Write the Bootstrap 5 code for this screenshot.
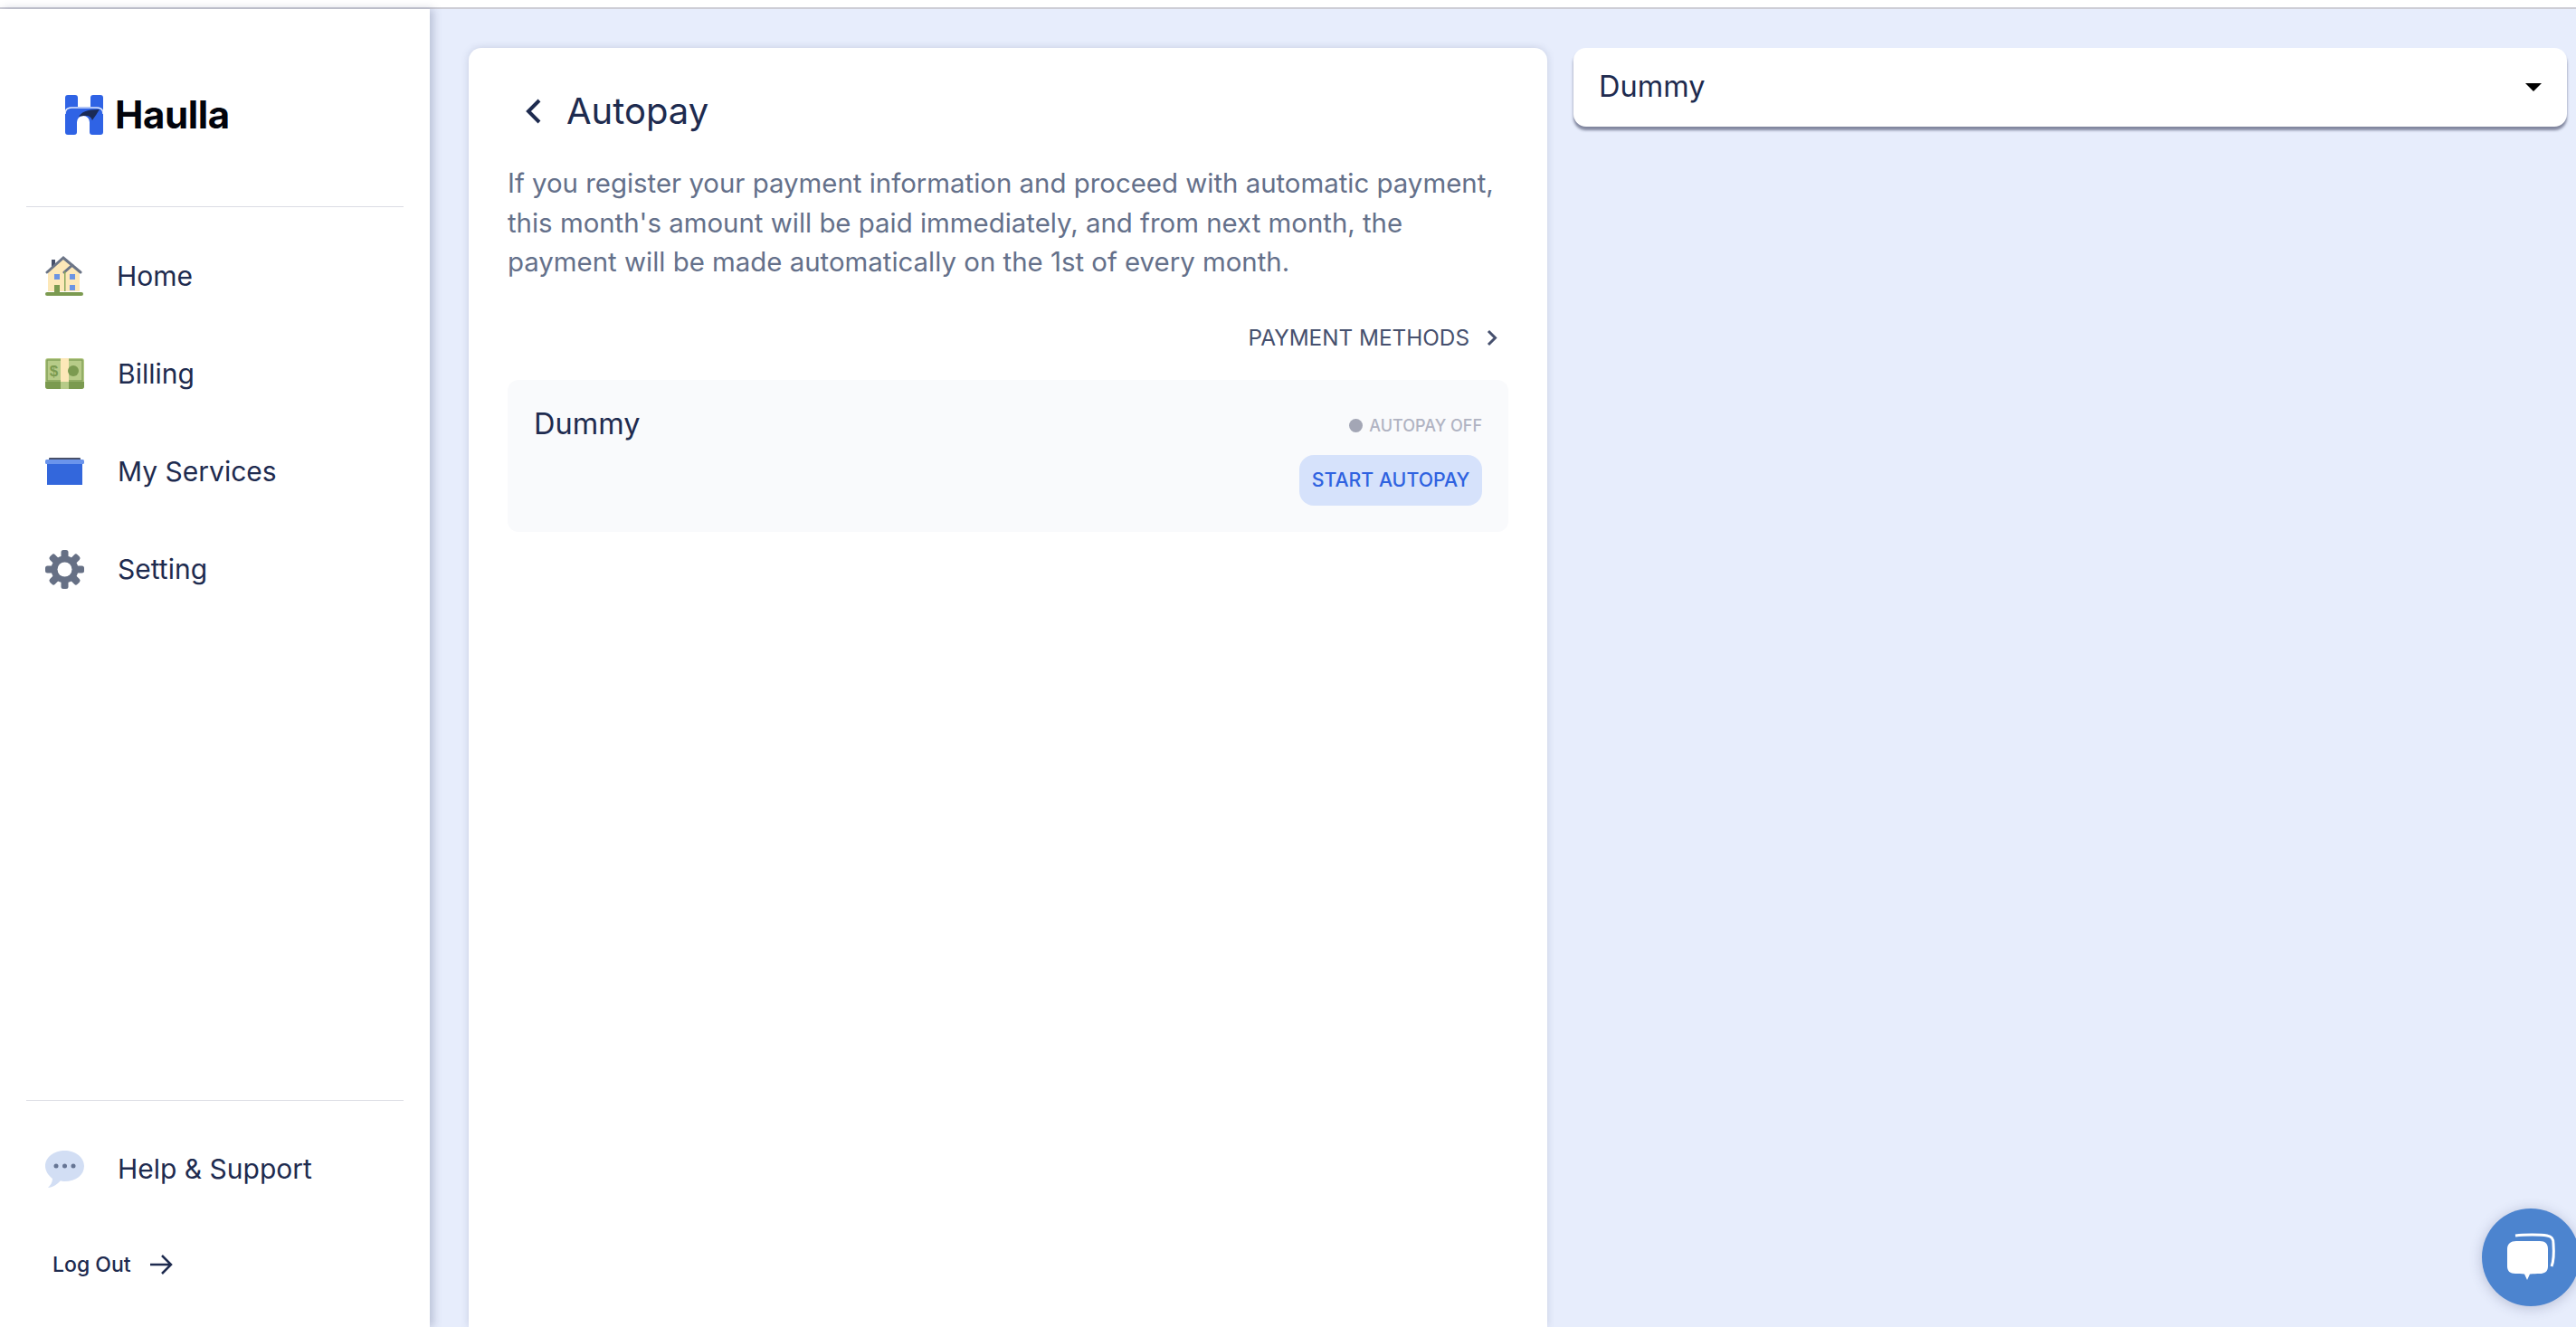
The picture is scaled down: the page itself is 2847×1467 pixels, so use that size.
<!doctype html>
<html lang="en">
<head>
<meta charset="utf-8">
<title>Autopay</title>
<link rel="stylesheet" href="https://cdn.jsdelivr.net/npm/bootstrap@5.3.0/dist/css/bootstrap.min.css">
<style>
html,body{height:100%}
body{background:#fff;overflow:hidden;font-family:"Inter","Liberation Sans",sans-serif;color:#1e2b4f}
.topstrip{height:10px;background:#fff;border-bottom:2px solid #cdcdd5;flex:none}
.stage{background:#e7edfc;min-height:0}
.sidebar{width:475px;flex:none;background:#fff;box-shadow:4px 0 9px rgba(70,80,120,.28);z-index:2}
.logobar{height:219px;padding:95px 0 0 43px;margin:0 29px;border-bottom:1px solid #dcdde4;gap:13px}
.logotext{font-size:42px;line-height:40px;font-weight:700;color:#02040c;letter-spacing:-.4px;margin-top:2px}
.navitem{height:108px;padding-left:21px;gap:37px;font-size:30px;font-weight:400;color:#1e2b4f;text-decoration:none}
.navlist{margin:0 29px;padding-top:22px}
.sidefoot{margin:0 29px;border-top:1px solid #dcdde4;padding:21px 0 49px}
.logout{font-size:23px;font-weight:500;color:#1e2b4f;text-decoration:none;padding-left:29px;margin-top:32px;gap:21px;height:40px}
.workarea{padding:43px 10px 0 43px;gap:29px;min-width:0}
.mainpanel{width:1192px;flex:none;border:0;border-radius:14px 14px 0 0;padding:42px 43px;box-shadow:0 0 8px rgba(70,80,120,.2)}
.heading{font-size:40px;font-weight:400;line-height:56px;color:#1e2b4f;gap:27px;padding-left:19px;margin:0}
.intro{font-size:29.400px;line-height:43.500px;color:#64708a;margin:30px 0 0;width:1105px}
.methods{font-size:24.300px;color:#46506e;gap:19px;margin-top:47px;padding-right:12px;height:30px}
.paybox{background:#f9fafc;border-radius:12px;height:168px;margin-top:31px;padding:26px 29px}
.payname{font-size:32.500px;line-height:46px;color:#1e2b4f}
.status{font-size:18px;line-height:26px;color:#b0b3c2;gap:7px;margin-top:12px;font-weight:500}
.statusdot{width:15px;height:15px;border-radius:50%;background:#a3a6b5;display:inline-block}
.startbtn{background:#d6e2fb;color:#2f62e0;border:0;border-radius:16px;height:56px;width:202px;padding:0;font-size:21.300px;font-weight:500;margin-top:19px}
.selectbox{background:#fff;height:87px;border-radius:14px;padding:0 28px;box-shadow:0 4px 3px rgba(60,65,95,.6);font-size:32.500px;color:#1e2b4f;width:1098px;flex:none}
.selectbox::after{color:#000;margin:0;border-width:.28em .28em 0}
.chatbubble{position:fixed;left:2743px;top:1336px;width:108px;height:108px;border-radius:50%;background:#4c84cf;box-shadow:0 2px 14px rgba(60,70,110,.28);z-index:5}
</style>
</head>
<body class="d-flex flex-column">
<div class="topstrip"></div>
<div class="stage d-flex flex-grow-1">
  <aside class="sidebar d-flex flex-column">
    <div class="logobar d-flex align-items-start">
      <svg width="42" height="44" viewBox="0 0 42 44" aria-hidden="true">
        <path fill="#2f63e5" d="M3 0h8a3 3 0 0 1 3 3v10h14V3a3 3 0 0 1 3-3h8a3 3 0 0 1 3 3v38a3 3 0 0 1-3 3h-9a3 3 0 0 1-3-3V30a7 7 0 0 0-14 0v11a3 3 0 0 1-3 3H3a3 3 0 0 1-3-3V3a3 3 0 0 1 3-3z"/>
        <path fill="none" stroke="#dfe8fb" stroke-width="1.6" d="M0 21c0-5 3-7 7-7h28c4 0 7 2 7 7"/>
        <path fill="#1b2b55" d="M15 24c3-5 8-8 23-8-2 3-5 8-8 12-1-3-3-5-7-5-3 0-6 0-8 1z"/>
      </svg>
      <div class="logotext">Haulla</div>
    </div>
    <nav class="navlist d-flex flex-column flex-grow-1">
      <a class="navitem d-flex align-items-center" href="#">
        <svg width="42" height="44" viewBox="0 0 42 44" aria-hidden="true"><rect x="7" y="4" width="4" height="10" fill="#475069"/><path fill="#fde8b8" d="M3 18 20 3l18 15v21H3z"/><path fill="none" stroke="#6c7587" stroke-width="3" stroke-linecap="round" d="M2 18 20 2l19 16M21 18l9-8"/><rect x="21" y="17" width="1.5" height="22" fill="#88a75c"/><rect x="10" y="20" width="6" height="6" fill="#6c94e3"/><rect x="27" y="20" width="6" height="6" fill="#6c94e3"/><rect x="27" y="32" width="6" height="6" fill="#6c94e3"/><rect x="10" y="32" width="6" height="8" fill="#7b9a50"/><rect x="0" y="40" width="42" height="4" rx="2" fill="#7b9a50"/></svg>
        <span>Home</span>
      </a>
      <a class="navitem d-flex align-items-center" href="#">
        <svg width="43" height="34" viewBox="0 0 43 34" aria-hidden="true"><rect width="43" height="34" rx="3" fill="#b7cb88"/><path d="M0 26h43v5a3 3 0 0 1-3 3H3a3 3 0 0 1-3-3z" fill="#7b9a50"/><rect x="2" y="2" width="39" height="23" fill="none" stroke="#7b9a50" stroke-width="1.2"/><rect x="17" width="9" height="26" fill="#fde8b8"/><rect x="17" y="26" width="9" height="8" fill="#b7cb88"/><text x="9.500" y="20" font-size="17" font-weight="700" fill="#7b9a50" text-anchor="middle" font-family="Liberation Sans">$</text><circle cx="31" cy="14" r="6" fill="#7b9a50"/></svg>
        <span>Billing</span>
      </a>
      <a class="navitem d-flex align-items-center" href="#">
        <svg width="43" height="30" viewBox="0 0 43 30" aria-hidden="true"><rect x="4" y="0" width="35" height="4" rx="1" fill="#475069"/><rect x="2" y="5" width="39" height="25" fill="#3367dc"/><rect y="2" width="43" height="5" rx="1.500" fill="#6a94ec"/></svg>
        <span>My Services</span>
      </a>
      <a class="navitem d-flex align-items-center" href="#">
        <svg width="43" height="43" viewBox="0 0 43 43" aria-hidden="true"><g fill="#667085"><rect x="17.500" y="0" width="8" height="43" rx="2.500"/><rect x="17.500" y="0" width="8" height="43" rx="2.500" transform="rotate(45 21.500 21.500)"/><rect x="17.500" y="0" width="8" height="43" rx="2.500" transform="rotate(90 21.500 21.500)"/><rect x="17.500" y="0" width="8" height="43" rx="2.500" transform="rotate(135 21.500 21.500)"/></g><circle cx="21.500" cy="21.500" r="11.500" fill="none" stroke="#667085" stroke-width="7"/><circle cx="21.500" cy="21.500" r="8" fill="#fff"/></svg>
        <span>Setting</span>
      </a>
    </nav>
    <div class="sidefoot">
      <a class="navitem d-flex align-items-center" href="#">
        <svg width="43" height="41" viewBox="0 0 43 41" aria-hidden="true"><path fill="#d2def4" d="M21.500 0C33 0 43 7 43 17s-9 17-21.500 17c-2 0-3.500 0-5-.4C14 37 8 41 3 41c3-3 5-6 5-10C3 27 0 22 0 17 0 7 10 0 21.500 0z"/><circle cx="12" cy="17" r="2.500" fill="#667594"/><circle cx="21.500" cy="17" r="2.500" fill="#667594"/><circle cx="31" cy="17" r="2.500" fill="#667594"/></svg>
        <span>Help &amp; Support</span>
      </a>
      <a class="logout d-flex align-items-center" href="#">
        <span>Log Out</span>
        <svg width="25" height="24" viewBox="0 0 25 24" aria-hidden="true"><path fill="none" stroke="#1e2b4f" stroke-width="2.500" d="M0 12h23M13 2l10 10-10 10"/></svg>
      </a>
    </div>
  </aside>
  <main class="workarea d-flex flex-grow-1 align-items-start">
    <section class="mainpanel card align-self-stretch">
      <h1 class="heading d-flex align-items-center">
        <svg width="19" height="28" viewBox="0 0 19 28" aria-hidden="true"><path fill="none" stroke="#1e2b4f" stroke-width="4" d="M16 2 4 14l12 12"/></svg>
        <span>Autopay</span>
      </h1>
      <p class="intro">If you register your payment information and proceed with automatic payment, this month's amount will be paid immediately, and from next month, the payment will be made automatically on the 1st of every month.</p>
      <div class="methods d-flex justify-content-end align-items-center">
        <span>PAYMENT METHODS</span>
        <svg width="12" height="19" viewBox="0 0 12 19" aria-hidden="true"><path fill="none" stroke="#46506e" stroke-width="3" d="m2 2 7.500 7.500L2 17"/></svg>
      </div>
      <div class="paybox d-flex justify-content-between">
        <div class="payname">Dummy</div>
        <div class="d-flex flex-column align-items-end">
          <div class="status d-flex align-items-center"><span class="statusdot"></span><span>AUTOPAY OFF</span></div>
          <button type="button" class="btn startbtn">START AUTOPAY</button>
        </div>
      </div>
    </section>
    <div class="selectbox dropdown-toggle d-flex justify-content-between align-items-center">Dummy</div>
  </main>
</div>
<div class="chatbubble d-flex align-items-center justify-content-center">
  <svg width="56" height="54" viewBox="0 0 56 54" aria-hidden="true"><path fill="none" stroke="#fff" stroke-width="3" d="M11 3c10-1.200 28-1.200 35 0 5 1 7 3 7 9 .7 10 0 20-2 25"/><path fill="#fff" d="M12 9h26c6 0 9 3 9 9v19c0 6-4 8-9 8-4 0-8 .5-11 .4L24 52l-3-6.600c-3 0-7-.4-10-.4-6 0-9-3-9-8V18c0-6 4-9 10-9z"/></svg>
</div>
</body>
</html>
